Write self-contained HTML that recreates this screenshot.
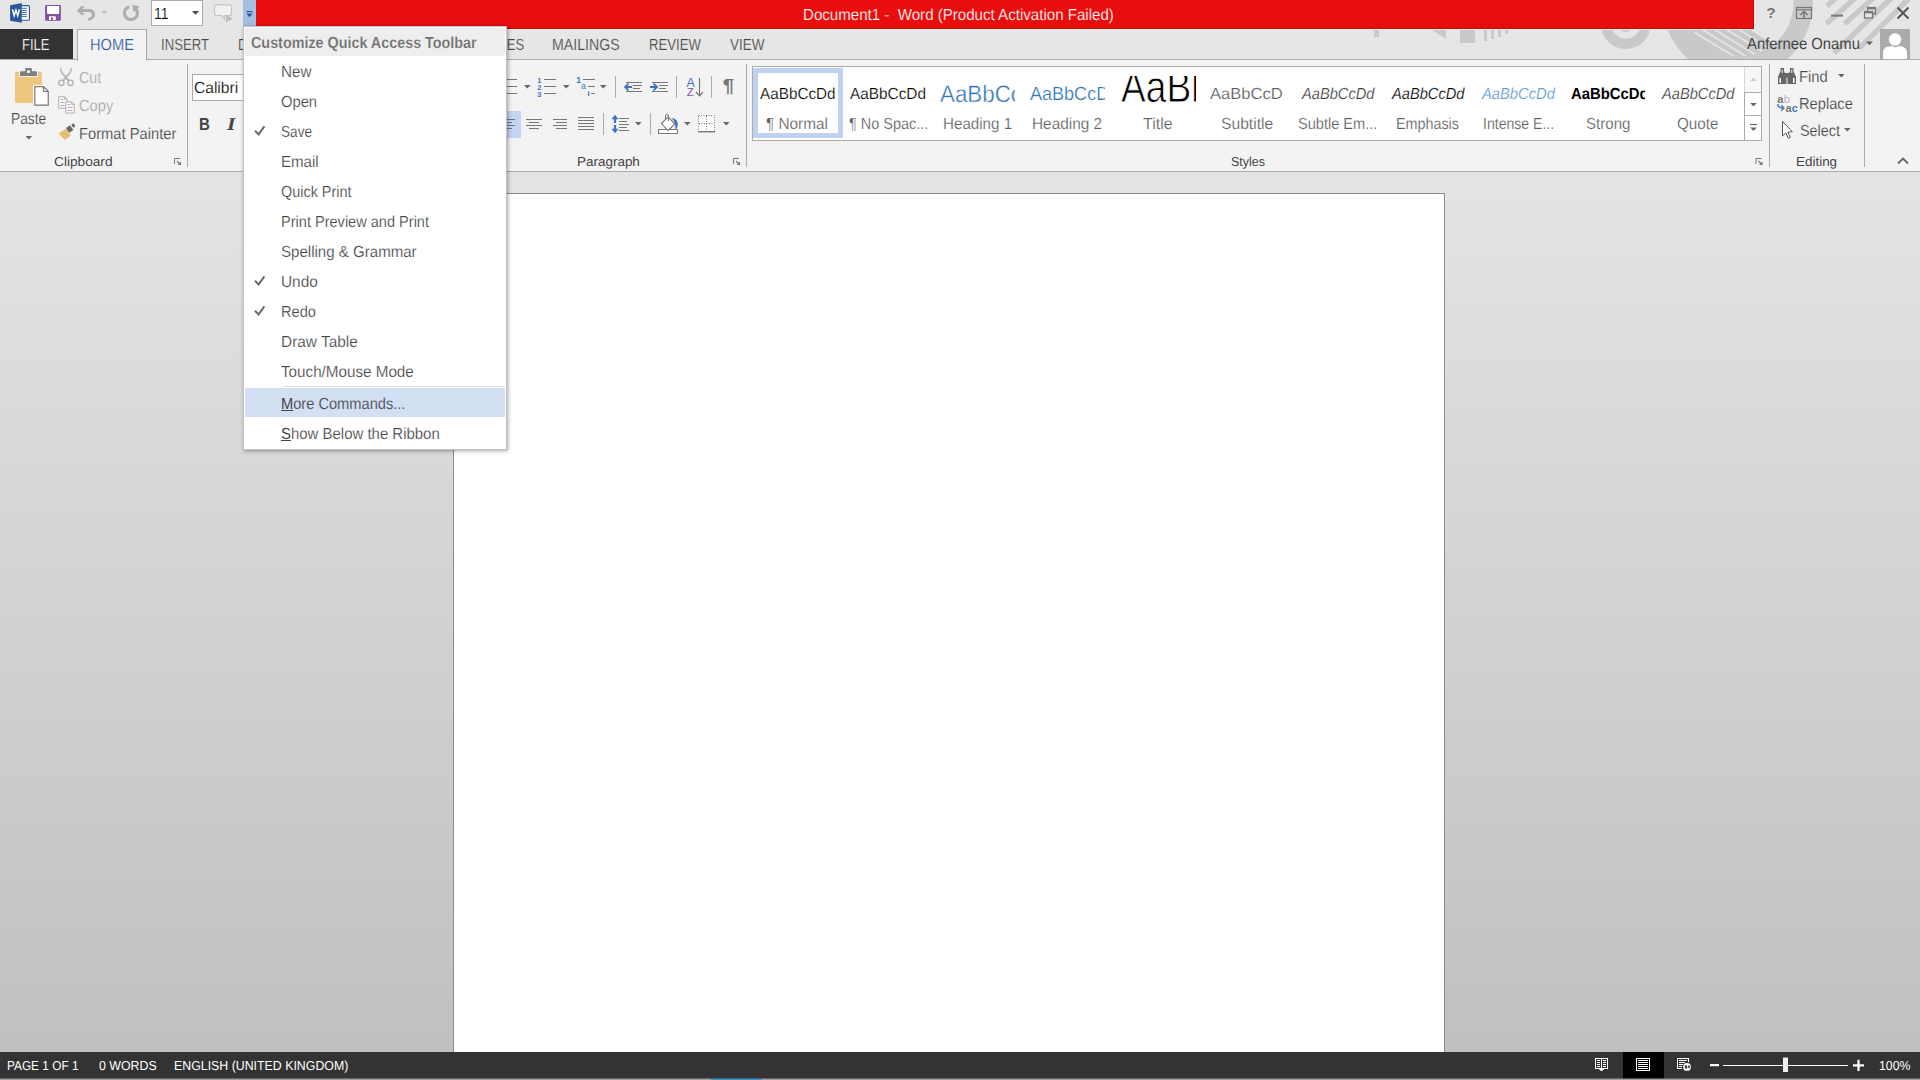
<!DOCTYPE html>
<html lang="en"><head><meta charset="utf-8"><title>Document1 - Word</title>
<style>
html,body{margin:0;padding:0}
body{width:1920px;height:1080px;position:relative;overflow:hidden;background:#e6e6e6;font-family:"Liberation Sans",sans-serif}
.a{position:absolute}
.t{text-rendering:geometricPrecision;position:absolute;white-space:pre;line-height:1;transform-origin:0 0;display:block}
.t u{text-decoration:underline;text-underline-offset:1px;text-decoration-thickness:1px;-webkit-text-stroke:0 transparent}
svg{position:absolute;left:0;top:0;overflow:visible}
</style></head><body>
<!-- window chrome -->
<div class="a" id="titlebg" style="left:0;top:0;width:1920px;height:60px;background:#e6e6e6"></div>
<svg id="deco" width="1920" height="60" viewBox="0 0 1920 60">
 <defs>
  <clipPath id="cpBig"><circle cx="1739.500" cy="2.600" r="54.500"/></clipPath>
  <clipPath id="cpTop"><rect x="0" y="0" width="1920" height="59"/></clipPath>
 </defs>
 <g clip-path="url(#cpTop)" fill="none" stroke="#c9c9c9">
  <path stroke-width="5.300" d="M1840.6 -6 L1826.9 6 M1859.9 -6 L1826.5 23.5 M1878.0 -6 L1844.6 23.8 M1895.7 -6 L1834.0 53 M1913.5 -6 L1859.0 48.5"/>
  <circle cx="1625.800" cy="24.200" r="19.700" stroke-width="10.200"/>
  <circle cx="1625.600" cy="24.500" r="7.600" fill="#c9c9c9" stroke="none"/>
  <path fill="#c9c9c9" stroke="none" fill-rule="evenodd" d="M1662.400 2.400 a75.300 75.300 0 1 0 150.600 0 a75.300 75.300 0 1 0 -150.600 0Z M1685.500 2.600 a54 54 0 1 0 108 0 a54 54 0 1 0 -108 0Z"/>
  <path clip-path="url(#cpBig)" stroke-width="4.700" d="M1617.0 -11.2 L1757.0 74.2 M1629.2 -11.2 L1769.2 74.2 M1641.5 -11.2 L1781.5 74.2 M1653.7 -11.2 L1793.7 74.2 M1666.0 -11.2 L1806.0 74.2 M1678.2 -11.2 L1818.2 74.2"/>
  <g fill="#c9c9c9" stroke="none">
   <rect x="1374" y="28" width="5" height="9"/>
   <path d="M1429 28 L1446 28 L1446 39 Z"/>
   <rect x="1460" y="28" width="15" height="15"/>
   <rect x="1484" y="28" width="3" height="13"/><rect x="1491" y="28" width="3" height="11"/><rect x="1498" y="28" width="3" height="9"/><rect x="1505" y="28" width="3" height="6"/>
  </g>
 </g>
</svg>
<div class="a" id="red" style="left:256px;top:0;width:1497px;height:28px;background:#e80e0e;border-bottom:1px solid #c60404;border-right:1px solid #c60404;box-sizing:content-box;box-shadow:0 1px 0 #e3eaea"></div>
<div class="a" id="qatbtn" style="left:243px;top:0;width:13px;height:26px;background:#a4bee4"></div>
<div class="a" id="fontsize" style="left:151px;top:0;width:50px;height:24px;background:#fff;border:1px solid #ababab"></div>
<!-- tabs -->
<div class="a" id="filetab" style="left:0;top:29px;width:73px;height:31px;background:#333"></div>
<div class="a" id="ribbon" style="left:0;top:59px;width:1920px;height:111px;background:#f3f3f3;border-top:1px solid #ababab;border-bottom:1px solid #ababab;box-sizing:content-box"></div>
<div class="a" id="hometab" style="left:77px;top:29px;width:68px;height:31px;background:#f3f3f3;border:1px solid #ababab;border-bottom:none"></div>
<div class="a" id="avatar" style="left:1880px;top:29px;width:30px;height:30px;background:#ababab;overflow:hidden">
 <svg width="30" height="30" viewBox="0 0 30 30"><circle cx="15" cy="10.5" r="6.2" fill="#fff"/><path d="M3 30 V24 Q3 18 9 17.5 L12 17 Q15 19.5 18 17 L21 17.5 Q27 18 27 24 V30 Z" fill="#fff"/></svg>
</div>
<!-- document area -->
<div class="a" id="docbg" style="left:0;top:172px;width:1920px;height:880px;background:linear-gradient(#e4e4e4,#c0c0c0)"></div>
<div class="a" id="page" style="left:453px;top:193px;width:990px;height:859px;background:#fff;border:1px solid #8c8c8c;border-bottom:none"></div>
<!-- status bar -->
<div class="a" id="status" style="left:0;top:1052px;width:1920px;height:26px;background:#333"></div>
<div class="a" style="left:0;top:1078px;width:1920px;height:1px;background:#666"></div>
<div class="a" style="left:0;top:1079px;width:1920px;height:1px;background:#a0a0a0"></div>
<div class="a" style="left:711px;top:1078px;width:51px;height:1px;background:#39688a"></div>
<div class="a" style="left:711px;top:1079px;width:51px;height:1px;background:#4390c4"></div>
<div class="a" style="left:1623px;top:1052px;width:41px;height:26px;background:#000"></div>
<div class="a" style="left:1623px;top:1078px;width:41px;height:1px;background:#4d4d4d"></div>
<!-- ribbon widgets -->
<div class="a" id="fontname" style="left:192px;top:74px;width:120px;height:25px;background:#fff;border:1px solid #ababab"></div>
<div class="a" id="alignleft" style="left:496px;top:111px;width:25px;height:27px;background:#c2d5f2"></div>
<div class="a" id="gallery" style="left:752px;top:66px;width:1008px;height:73px;background:#fff;border:1px solid #ababab"></div>
<div class="a" id="selstyle" style="left:753px;top:68px;width:80px;height:60px;border:5px solid #bfd2f2;background:#fff"></div>
<div class="a" style="left:1745px;top:67px;width:16px;height:25px;background:#f7f7f7"></div>
<div class="a" style="left:1744px;top:67px;width:1px;height:73px;background:#ababab"></div>
<div class="a" style="left:1744px;top:67px;width:1px;height:25px;background:#d6d6d6"></div>
<div class="a" style="left:1745px;top:92px;width:16px;height:1px;background:#ababab"></div>
<div class="a" style="left:1745px;top:115px;width:16px;height:1px;background:#ababab"></div>
<svg id="icons" width="1920" height="1080" viewBox="0 0 1920 1080">
<!-- ===== QAT ===== -->
<g id="wordicon">
 <rect x="20.500" y="5.600" width="8.900" height="14.700" rx="1" fill="#fff" stroke="#2b579a" stroke-width="1.100"/>
 <path d="M22 8.300h4.800M22 10.500h4.800M22 12.500h4.800M22 14.550h4.800M22 16.600h4.800" stroke="#2b579a" stroke-width=".900"/>
 <path d="M10.100 5.250 L21.800 3.050 V22.700 L10.100 20.650 Z" fill="#2b579a"/>
 <path d="M12.500 9.300 L14.150 15.700 L15.950 10.200 L17.750 15.700 L19.400 9.300" fill="none" stroke="#fff" stroke-width="1.500" stroke-linejoin="miter"/>
</g>
<g id="saveicon">
 <rect x="45.100" y="5.100" width="15.800" height="15.700" rx="1.200" fill="#8450a6"/>
 <path d="M47 5.900 H59.200 V13 Q59.200 14.050 58.200 14.050 H48 Q47 14.050 47 13Z" fill="#fff"/>
 <rect x="49" y="16.250" width="6.800" height="3.800" rx=".600" fill="#fff"/>
 <rect x="51" y="17.300" width="1.900" height="3.500" fill="#8450a6"/>
</g>
<g id="undo" fill="#adadad">
 <path d="M76.900 10.500 L81.250 6.200 H84.800 L82.200 9 H89.600 Q95 9.400 95 14.600 Q94.800 20 88.100 20.900 V18.300 Q91.800 17.800 91.800 14.600 Q91.800 12.200 88.700 12.100 H82.200 L84.800 14.800 H81.250Z"/>
</g>
<path d="M101 11 h6.5 l-3.25 3.6z" fill="#c2c2c2"/>
<g id="redo">
 <path d="M134.200 7.400 A6.500 6.500 0 1 1 129.300 6.700" fill="none" stroke="#adadad" stroke-width="3"/>
 <path d="M132.100 5 L139.600 6.300 L133.750 12.500Z" fill="#adadad"/>
</g>
<path d="M192 11 h7 l-3.5 3.8z" fill="#444"/>
<g id="bubble">
 <path d="M216.5 4.8 H229.5 Q231.5 4.8 231.5 6.8 V13.5 Q231.5 15.5 229.5 15.5 H224.5 V19 L221.5 15.5 H216.5 Q214.5 15.5 214.5 13.5 V6.8 Q214.5 4.8 216.5 4.8Z" fill="#f5f0f6" stroke="#c4c4c4" stroke-width="1.2"/>
 <path d="M226 14.5 L233 18.5 L226 22.5Z" fill="#c0c0c0"/>
</g>
<g id="qatarrow" fill="#2b579a"><rect x="246.5" y="11" width="6" height="1.2"/><path d="M246.3 13.6 h6.4 l-3.2 3.6z"/></g>
<!-- window controls -->
<g id="winctl" stroke="#777" fill="none">
 <text x="1766.3" y="18.3" font-family="Liberation Sans, sans-serif" font-weight="bold" font-size="15.5" fill="#777" stroke="none">?</text>
 <rect x="1796.5" y="7.5" width="15" height="11" stroke-width="1.2"/><path d="M1796.5 9.8h15" stroke-width="1.2"/>
 <path d="M1804 18.5 V12 M1800.3 15 L1804 11.5 L1807.7 15" stroke-width="1.6"/>
 <path d="M1831 15.6 h12" stroke-width="2"/>
 <rect x="1867.5" y="7.5" width="8" height="6.5" stroke-width="1.3"/><path d="M1867.5 8.6h8" stroke-width="1.5"/>
 <rect x="1864.500" y="11.5" width="8" height="6.500" stroke-width="1.3" fill="#e6e6e6"/><path d="M1864.5 12.6h8" stroke-width="1.5"/>
 <path d="M1897.5 7.5 L1908.5 18.5 M1908.5 7.5 L1897.5 18.5" stroke="#555" stroke-width="2"/>
</g>
<path d="M1866 41.500 h7 l-3.5 3.800z" fill="#666"/>
<!-- ===== Clipboard group ===== -->
<g id="paste">
 <rect x="15" y="71.850" width="26.950" height="31.100" rx="1.500" fill="#edc77d"/>
 <rect x="19" y="70.500" width="19" height="6.400" fill="#f3f3f3"/>
 <path d="M20 75.900 V72.200 Q20 71.200 21 71.200 H25.100 V69.400 Q25.100 68.100 26.400 68.100 H30.650 Q31.950 68.100 31.950 69.400 V71.200 H35.900 Q36.900 71.200 36.900 72.200 V75.900Z" fill="#7e7e7e"/>
 <rect x="27.100" y="70.300" width="2.900" height="2.600" fill="#fff"/>
 <rect x="33.200" y="85.100" width="16.600" height="21.700" fill="#f3f3f3"/>
 <rect x="33.200" y="85.100" width="8.800" height="17.850" fill="#fff"/>
 <path d="M34.800 86.700 H43.500 L48.250 91.500 V105.200 H34.800Z" fill="#fff" stroke="#777" stroke-width="1.200"/>
 <path d="M43.500 86.700 V91.500 H48.250" fill="none" stroke="#777" stroke-width="1.200"/>
</g>
<path d="M25.500 136 h6.600 l-3.300 3.600z" fill="#666"/>
<g id="cut">
 <path d="M60.600 67.800 Q61 71.800 65.200 75.600 L69.500 80.600 L68.200 81.300 L64.300 76.500 Q59.400 72 60.600 67.800Z" fill="#b2b2b2" stroke="#b2b2b2" stroke-width=".600"/>
 <path d="M71.200 67.800 Q70.800 71.800 66.600 75.600 L62.300 80.600 L63.600 81.300 L67.500 76.500 Q72.400 72 71.200 67.800Z" fill="#b2b2b2" stroke="#b2b2b2" stroke-width=".600"/>
 <circle cx="61.400" cy="82.800" r="2.700" fill="none" stroke="#b2b2b2" stroke-width="1.300"/><circle cx="70.500" cy="82.800" r="2.700" fill="none" stroke="#b2b2b2" stroke-width="1.300"/>
</g>
<g id="copy" fill="#fcf4fc" stroke="#b6b0b6" stroke-width="1">
 <path d="M58.700 96.700 H64.600 L67.200 99.300 V108.200 H58.700Z"/>
 <path d="M64.600 96.700 V99.300 H67.200" fill="none"/>
 <path d="M60.500 99.500h2.500M60.500 102.500h4M60.500 105.500h4" stroke="#b0b0b0"/>
 <path d="M65.800 101.800 H71.700 L74.300 104.400 V113.100 H65.800Z"/>
 <path d="M71.700 101.800 V104.400 H74.300" fill="none"/>
 <path d="M67.500 104.500h2.500M67.500 107.500h5M67.500 110.500h5" stroke="#b0b0b0"/>
</g>
<g id="fmtpaint">
 <path d="M58.500 133.500 L66 128.500 L71 135.500 L65 140Z" fill="#e9bd75"/>
 <path d="M66 128 L70 125.300 L73.300 130 L69.300 132.700Z" fill="#666"/>
 <path d="M71.300 124.800 L73.500 123.300 L75.500 126.200 L73.300 127.700Z" fill="#666"/>
</g>
<g id="launch1" fill="none" stroke="#777" stroke-width="1"><path d="M174.500 164 V158.500 H180"/><path d="M177 161 L180.500 164.500" stroke-width="1.300"/><path d="M181 161.500 V165 H177.500Z" fill="#777" stroke="none"/></g>
<g id="launch2" transform="translate(559,0)" fill="none" stroke="#777" stroke-width="1"><path d="M174.500 164 V158.500 H180"/><path d="M177 161 L180.500 164.500" stroke-width="1.300"/><path d="M181 161.500 V165 H177.500Z" fill="#777" stroke="none"/></g>
<g id="launch3" transform="translate(1581.500,0)" fill="none" stroke="#777" stroke-width="1"><path d="M174.500 164 V158.500 H180"/><path d="M177 161 L180.500 164.500" stroke-width="1.300"/><path d="M181 161.500 V165 H177.500Z" fill="#777" stroke="none"/></g>
<!-- group separators -->
<g stroke="#ababab" stroke-width="1" shape-rendering="crispEdges">
 <path d="M187.500 64 V167 M746.500 64 V167 M1769.500 64 V167 M1864.500 64 V167"/>
 <path d="M615.500 76 V98 M676.500 76 V98 M711.500 76 V98 M603.500 113 V135 M650.500 113 V135"/>
</g>
<!-- ===== Paragraph group ===== -->
<g id="para" shape-rendering="crispEdges" stroke="#777" stroke-width="1" fill="none">
 <!-- bullets lines -->
 <path d="M500 79.500 H517 M500 86.500 H517 M500 93.500 H517"/>
 <!-- numbering lines -->
 <path d="M544 79.500 H556 M544 86.500 H556 M544 93.500 H556"/>
 <!-- multilevel -->
 <path d="M583 79.500 H595 M588 86.500 H595 M591 93.500 H595"/>
 <!-- decrease indent -->
 <path d="M626 82.500 H642 M633 85.500 H642 M633 88.500 H640 M626 91.500 H642"/>
 <!-- increase indent -->
 <path d="M652 82.500 H668 M659 85.500 H668 M659 88.500 H666 M652 91.500 H668"/>
 <!-- align left -->
 <path d="M500 119.500 H515 M500 122.500 H512 M500 125.500 H515 M500 128.500 H512"/>
 <!-- center -->
 <path d="M526 119.500 H542 M529 122.500 H539 M526 125.500 H542 M529 128.500 H539"/>
 <!-- right -->
 <path d="M553 119.500 H567 M556 122.500 H567 M553 125.500 H567 M556 128.500 H567"/>
 <!-- justify -->
 <path d="M578 117.500 H594 M578 120.500 H594 M578 123.500 H594 M578 126.500 H594 M578 129.500 H594"/>
 <!-- line spacing lines -->
 <path d="M619 118.500 H629 M619 121.500 H627 M619 124.500 H629 M619 127.500 H627 M619 130.500 H629"/>
</g>
<g fill="#666"><path d="M524 85 h6.600 l-3.300 3.600z"/><path d="M563 85 h6.600 l-3.300 3.600z"/><path d="M600 85 h6.600 l-3.300 3.600z"/><path d="M635 122 h6.600 l-3.300 3.600z"/><path d="M684 122 h6.600 l-3.300 3.600z"/><path d="M723 122 h6.600 l-3.300 3.600z"/></g>
<g font-family="Liberation Sans, sans-serif" font-weight="bold" fill="#3e73bd" font-size="7.500">
 <text x="537.300" y="82.500">1</text><text x="537.300" y="89.600">2</text><text x="537.300" y="96.700">3</text>
 <text x="576.300" y="82.800" font-size="8.500">1</text><text x="581" y="89.300" font-size="9" font-weight="normal">a</text><text x="587.600" y="96.300" font-size="8">i</text>
</g>
<g id="indarrows" fill="none" stroke="#3e73bd" stroke-width="1.800">
 <path d="M632 87 H625 M628.500 83.600 L625 87 L628.500 90.400"/>
 <path d="M650 87 H657 M653.500 83.600 L657 87 L653.500 90.400"/>
</g>
<g id="sort">
 <text x="686.500" y="86.800" font-family="Liberation Sans, sans-serif" font-size="12.500" fill="#3e73bd">A</text>
 <text x="686.800" y="96.300" font-family="Liberation Sans, sans-serif" font-size="11.500" fill="#8e4fb0">Z</text>
 <path d="M699.500 78 V95.500 M696 92 L699.500 95.800 L703 92" fill="none" stroke="#777" stroke-width="1.200"/>
</g>
<text x="722.800" y="92.400" font-family="Liberation Sans, sans-serif" font-size="18" font-weight="bold" fill="#777" textLength="11.500" lengthAdjust="spacingAndGlyphs">¶</text>
<g id="lsarrows" fill="#3e73bd">
 <path d="M615 114.800 L618.600 119.200 H616.100 V123 H613.900 V119.200 H611.400Z"/>
 <path d="M615 133.200 L618.600 128.800 H616.100 V125 H613.900 V128.800 H611.400Z"/>
</g>
<g id="shading">
 <rect x="658.500" y="129.500" width="19" height="4" fill="#fff" stroke="#777"/>
 <path d="M661.500 123.500 L668 117 L675 124 L668 130.500Z" fill="#fff" stroke="#777" stroke-width="1.100"/>
 <path d="M668.500 121 V116 Q668.500 114.500 667 114.500 Q665.500 114.500 665.500 116 V119" fill="none" stroke="#777" stroke-width="1"/>
 <path d="M671.500 118 Q678.200 119 677.900 125 Q677.600 128.200 675.300 129.400 Q676.400 123 671.500 118Z" fill="#3e73bd"/>
</g>
<g id="borders" stroke="#777" fill="none">
 <rect x="698.500" y="115.500" width="16" height="16" stroke-dasharray="1 1.500" stroke-width="1" fill="#fff"/>
 <path d="M706.500 116 V131 M699 123.500 H714" stroke-dasharray="1 1.500" stroke-width="1"/>
 <path d="M698 131.700 H715" stroke-width="1.400"/>
</g>
<!-- gallery scroll -->
<path d="M1750.500 81 l3 -3.200 l3 3.200z" fill="#c8c8c8"/>
<path d="M1750.200 103 h6.600 l-3.300 3.600z" fill="#666"/>
<path d="M1750 124.500 h7" stroke="#666" stroke-width="1.200"/><path d="M1750.200 127.500 h6.600 l-3.300 3.600z" fill="#666"/>
<!-- editing -->
<g id="find" fill="#666">
 <path d="M1780.500 68 h3.500 v3 l2.500 6 v7 h-8.500 v-7 l2.500 -6z"/>
 <path d="M1790 68 h3.500 v3 l2.500 6 v7 h-8.500 v-7 l2.500 -6z"/>
 <rect x="1783.500" y="73" width="7" height="4.500"/>
 <rect x="1779.500" y="78" width="1.500" height="5" fill="#fff"/><rect x="1793" y="78" width="1.500" height="5" fill="#fff"/>
 <rect x="1781.700" y="69.500" width="1" height="3.500" fill="#f3f3f3"/><rect x="1791.300" y="69.500" width="1" height="3.500" fill="#f3f3f3"/>
</g>
<path d="M1838 74 h6.600 l-3.300 3.600z" fill="#666"/>
<g id="replace" font-family="Liberation Sans, sans-serif" font-size="11">
 <text x="1777.300" y="102.600" fill="#777" font-weight="bold">a</text><text x="1783.800" y="102.600" fill="#b8b8b8">b</text>
 <text x="1785.600" y="112" fill="#777" font-weight="bold">a</text><text x="1791.800" y="112" fill="#3e73bd" font-weight="bold">c</text>
 <path d="M1777.800 104 Q1777.800 108 1783.500 108 M1781.200 105.300 L1784 108 L1781.200 110.700" fill="none" stroke="#3e73bd" stroke-width="1.300"/>
</g>
<path d="M1782.500 121.500 V136 L1785.800 133 L1788.300 138.300 L1790.300 137.400 L1787.800 132.200 L1792.300 131.700Z" fill="#fff" stroke="#555" stroke-width="1"/>
<path d="M1844 128 h6.600 l-3.300 3.600z" fill="#666"/>
<path d="M1898 163.500 L1903 158.500 L1908 163.500" fill="none" stroke="#666" stroke-width="1.800"/>
<!-- ===== Status bar ===== -->
<g id="status-icons" fill="none" stroke="#fff" stroke-width="1" shape-rendering="crispEdges">
 <path d="M1595.500 1058.500 H1607.500 V1068.500 H1595.500Z"/>
 <path d="M1601.500 1059 V1069"/>
 <path d="M1597 1060.500h3M1597 1062.500h3M1597 1064.500h3M1597 1066.500h3M1603 1060.500h3M1603 1062.500h3M1603 1064.500h3M1603 1066.500h3"/>
 <path d="M1599.500 1069 L1601.500 1071 L1603.500 1069Z" fill="#fff" shape-rendering="auto"/>
 <rect x="1636.500" y="1058.500" width="13" height="12"/>
 <path d="M1638 1060.500h10M1638 1062.500h10M1638 1064.500h10M1638 1066.500h10M1638 1068.500h10"/>
 <path d="M1688.500 1062 V1058.500 H1677.500 V1068.500 H1682"/>
 <path d="M1679 1060.500h8M1679 1062.500h6M1679 1064.500h4M1679 1066.500h3"/>
 <circle cx="1687" cy="1066.900" r="3.900" fill="#fff" stroke="none" shape-rendering="auto"/>
 <path d="M1684.600 1065.200 l2.300 .300 l.600 2 l-1.500 1.700 l-1.200 -1.500z M1688.600 1064.800 l1.600 1.700 l-.800 2.300 l-1.500 -1.600z" fill="#444" stroke="none" shape-rendering="auto"/>
</g>
<g id="zoomslider" fill="#fff">
 <rect x="1710" y="1064" width="9" height="2.200"/>
 <rect x="1723" y="1065" width="125" height="1"/>
 <rect x="1783" y="1057.500" width="5" height="14.500" fill="#f0f0f0"/>
 <rect x="1853" y="1064.300" width="11" height="2.200"/><rect x="1857.400" y="1059.800" width="2.200" height="11.200"/>
</g>
</svg>

<div id="txt">
<span class="t" style="left:803.22px;top:7.59px;font-size:16px;color:#fff;transform:scaleX(0.9430);-webkit-text-stroke:0.2px #e80e0e;">Document1 -&nbsp; Word (Product Activation Failed)</span>
<span class="t" style="left:22.12px;top:37.59px;font-size:16px;color:#fff;transform:scaleX(0.8102);-webkit-text-stroke:0.2px #333;">FILE</span>
<span class="t" style="left:89.68px;top:37.59px;font-size:16px;color:#2b579a;transform:scaleX(0.9144);-webkit-text-stroke:0.2px #f3f3f3;">HOME</span>
<span class="t" style="left:160.86px;top:37.59px;font-size:16px;color:#444;transform:scaleX(0.8212);-webkit-text-stroke:0.2px #e6e6e6;">INSERT</span>
<span class="t" style="left:237.62px;top:37.59px;font-size:16px;color:#444;transform:scaleX(0.8104);-webkit-text-stroke:0.2px #e6e6e6;">DESIGN</span>
<span class="t" style="left:313.52px;top:37.59px;font-size:16px;color:#444;transform:scaleX(0.8451);-webkit-text-stroke:0.2px #e6e6e6;">PAGE LAYOUT</span>
<span class="t" style="left:434.61px;top:37.59px;font-size:16px;color:#444;transform:scaleX(0.8152);-webkit-text-stroke:0.2px #e6e6e6;">REFERENCES</span>
<span class="t" style="left:552.20px;top:37.59px;font-size:16px;color:#444;transform:scaleX(0.8840);-webkit-text-stroke:0.2px #e6e6e6;">MAILINGS</span>
<span class="t" style="left:648.70px;top:37.59px;font-size:16px;color:#444;transform:scaleX(0.8227);-webkit-text-stroke:0.2px #e6e6e6;">REVIEW</span>
<span class="t" style="left:729.84px;top:37.59px;font-size:16px;color:#444;transform:scaleX(0.8425);-webkit-text-stroke:0.2px #e6e6e6;">VIEW</span>
<span class="t" style="left:1747.42px;top:36.59px;font-size:16px;color:#444;transform:scaleX(0.9267);">Anfernee Onamu</span>
<span class="t" style="left:153.69px;top:6.59px;font-size:16px;color:#000;transform:scaleX(0.8764);-webkit-text-stroke:0.2px #fff;">11</span>
<span class="t" style="left:10.99px;top:111.59px;font-size:16px;color:#444;transform:scaleX(0.8575);-webkit-text-stroke:0.2px #f3f3f3;">Paste</span>
<span class="t" style="left:79.45px;top:70.59px;font-size:16px;color:#a6a6a6;transform:scaleX(0.8919);-webkit-text-stroke:0.2px #f3f3f3;">Cut</span>
<span class="t" style="left:79.41px;top:98.59px;font-size:16px;color:#a6a6a6;transform:scaleX(0.9161);-webkit-text-stroke:0.2px #f3f3f3;">Copy</span>
<span class="t" style="left:78.88px;top:126.59px;font-size:16px;color:#444;transform:scaleX(0.9196);-webkit-text-stroke:0.2px #f3f3f3;">Format Painter</span>
<span class="t" style="left:54.43px;top:155.43px;font-size:13px;color:#444;transform:scaleX(1.0519);">Clipboard</span>
<span class="t" style="left:193.73px;top:80.59px;font-size:16px;color:#000;transform:scaleX(0.9722);-webkit-text-stroke:0.2px #fff;">Calibri</span>
<span class="t" style="left:198.76px;top:116.27px;font-size:17.4px;color:#444;transform:scaleX(0.8661);font-weight:bold;">B</span>
<span class="t" style="left:227.03px;top:114.84px;font-size:18.1px;color:#444;transform:scaleX(1.1995);font-weight:bold;font-style:italic;font-family:'Liberation Serif', serif;">I</span>
<span class="t" style="left:576.54px;top:155.43px;font-size:13px;color:#444;transform:scaleX(1.0353);">Paragraph</span>
<span class="t" style="left:1230.63px;top:155.43px;font-size:13px;color:#444;transform:scaleX(0.9595);">Styles</span>
<span class="t" style="left:1796.07px;top:155.43px;font-size:13px;color:#444;transform:scaleX(1.0336);">Editing</span>
<span class="t" style="left:1799.36px;top:69.59px;font-size:16px;color:#444;transform:scaleX(0.9268);-webkit-text-stroke:0.2px #f3f3f3;">Find</span>
<span class="t" style="left:1799.38px;top:96.59px;font-size:16px;color:#444;transform:scaleX(0.9173);-webkit-text-stroke:0.2px #f3f3f3;">Replace</span>
<span class="t" style="left:1800.03px;top:123.59px;font-size:16px;color:#444;transform:scaleX(0.9000);-webkit-text-stroke:0.2px #f3f3f3;">Select</span>
<span class="t" style="left:6.83px;top:1059.43px;font-size:13px;color:#fff;transform:scaleX(0.9107);">PAGE 1 OF 1</span>
<span class="t" style="left:98.54px;top:1059.43px;font-size:13px;color:#fff;transform:scaleX(0.9508);">0 WORDS</span>
<span class="t" style="left:173.68px;top:1059.43px;font-size:13px;color:#fff;transform:scaleX(0.9502);">ENGLISH (UNITED KINGDOM)</span>
<span class="t" style="left:1879.14px;top:1059.43px;font-size:13px;color:#fff;transform:scaleX(0.9426);">100%</span>
<span class="t" style="left:760.38px;top:86.59px;font-size:16px;color:#000;transform:scaleX(0.9549);-webkit-text-stroke:0.2px #fff;">AaBbCcDd</span>
<span class="t" style="left:765.90px;top:116.59px;font-size:16px;color:#5e5e5e;transform:scaleX(0.9585);-webkit-text-stroke:0.2px #fff;">¶ Normal</span>
<span class="t" style="left:849.88px;top:86.59px;font-size:16px;color:#000;transform:scaleX(0.9604);-webkit-text-stroke:0.2px #fff;">AaBbCcDd</span>
<span class="t" style="left:848.59px;top:116.59px;font-size:16px;color:#5e5e5e;transform:scaleX(0.9045);-webkit-text-stroke:0.2px #fff;">¶ No Spac...</span>
<div class="a" style="left:935px;top:70px;width:79.8px;height:42.0px;overflow:hidden"><span class="t" style="left:5.36px;top:12.88px;font-size:23.8px;color:#2e74b5;transform:scaleX(0.9397);-webkit-text-stroke:0.4px #fff;">AaBbCc</span></div>
<span class="t" style="left:942.60px;top:116.59px;font-size:16px;color:#5e5e5e;transform:scaleX(0.9473);-webkit-text-stroke:0.2px #fff;">Heading 1</span>
<div class="a" style="left:1025px;top:70px;width:79.8px;height:42.0px;overflow:hidden"><span class="t" style="left:5.43px;top:14.95px;font-size:19px;color:#2e74b5;transform:scaleX(0.9490);-webkit-text-stroke:0.25px #fff;">AaBbCcD</span></div>
<span class="t" style="left:1032.35px;top:116.59px;font-size:16px;color:#5e5e5e;transform:scaleX(0.9610);-webkit-text-stroke:0.2px #fff;">Heading 2</span>
<div class="a" style="left:1115px;top:75.9px;width:80.7px;height:36.1px;overflow:hidden"><span class="t" style="left:6.06px;top:-9.57px;font-size:44.5px;color:#000;transform:scaleX(0.8338);-webkit-text-stroke:0.8px #fff;">AaBb</span></div>
<span class="t" style="left:1143.44px;top:116.59px;font-size:16px;color:#5e5e5e;transform:scaleX(0.9995);-webkit-text-stroke:0.2px #fff;">Title</span>
<span class="t" style="left:1209.86px;top:86.59px;font-size:16px;color:#5a5a5a;transform:scaleX(1.0364);-webkit-text-stroke:0.2px #fff;">AaBbCcD</span>
<span class="t" style="left:1221.40px;top:116.59px;font-size:16px;color:#5e5e5e;transform:scaleX(0.9776);-webkit-text-stroke:0.2px #fff;">Subtitle</span>
<span class="t" style="left:1301.75px;top:86.61px;font-size:16px;color:#404040;transform:scaleX(0.9151);font-style:italic;-webkit-text-stroke:0.2px #fff;">AaBbCcDd</span>
<span class="t" style="left:1298.18px;top:116.59px;font-size:16px;color:#5e5e5e;transform:scaleX(0.9104);-webkit-text-stroke:0.2px #fff;">Subtle Em...</span>
<span class="t" style="left:1391.75px;top:86.61px;font-size:16px;color:#000;transform:scaleX(0.9151);font-style:italic;-webkit-text-stroke:0.2px #fff;">AaBbCcDd</span>
<span class="t" style="left:1396.19px;top:116.59px;font-size:16px;color:#5e5e5e;transform:scaleX(0.8963);-webkit-text-stroke:0.2px #fff;">Emphasis</span>
<span class="t" style="left:1481.75px;top:86.61px;font-size:16px;color:#5b9bd5;transform:scaleX(0.9205);font-style:italic;-webkit-text-stroke:0.2px #fff;">AaBbCcDd</span>
<span class="t" style="left:1482.58px;top:116.59px;font-size:16px;color:#5e5e5e;transform:scaleX(0.8785);-webkit-text-stroke:0.2px #fff;">Intense E...</span>
<div class="a" style="left:1565px;top:70px;width:80.2px;height:42.0px;overflow:hidden"><span class="t" style="left:5.61px;top:17.46px;font-size:16px;color:#000;transform:scaleX(0.9292);font-weight:bold;">AaBbCcDd</span></div>
<span class="t" style="left:1586.05px;top:116.59px;font-size:16px;color:#5e5e5e;transform:scaleX(0.9436);-webkit-text-stroke:0.2px #fff;">Strong</span>
<span class="t" style="left:1661.75px;top:86.61px;font-size:16px;color:#404040;transform:scaleX(0.9151);font-style:italic;-webkit-text-stroke:0.2px #fff;">AaBbCcDd</span>
<span class="t" style="left:1676.99px;top:116.59px;font-size:16px;color:#5e5e5e;transform:scaleX(0.9530);-webkit-text-stroke:0.2px #fff;">Quote</span>
</div>
<!-- ===== Customize Quick Access Toolbar menu ===== -->
<div class="a" id="menu" style="left:243px;top:26px;width:262px;height:422px;background:#fff;border:1px solid #c2c2c2;box-shadow:1px 1px 4px rgba(0,0,0,.36)"></div>
<div class="a" style="left:245px;top:28px;width:260px;height:28px;background:#eee"></div>
<div class="a" style="left:283px;top:386px;width:222px;height:1px;background:#e1e1e1"></div>
<div class="a" style="left:245px;top:388px;width:260px;height:29px;background:#d3dff3"></div>
<svg width="1920" height="1080" viewBox="0 0 1920 1080" fill="none" stroke="#6c6c6c" stroke-width="2">
 <path d="M255 130.800 L258.600 134.400 L264.400 126.400"/>
 <path d="M255 280.800 L258.600 284.400 L264.400 276.400"/>
 <path d="M255 310.800 L258.600 314.400 L264.400 306.400"/>
</svg>
<div id="menutxt">
<span class="t" style="left:251.29px;top:36.46px;font-size:16px;color:#6d6d6d;transform:scaleX(0.8968);font-weight:bold;-webkit-text-stroke:0.2px #eee;">Customize Quick Access Toolbar</span>
<span class="t" style="left:280.59px;top:64.59px;font-size:16px;color:#444;transform:scaleX(0.9507);-webkit-text-stroke:0.2px #fff;">New</span>
<span class="t" style="left:281.26px;top:94.59px;font-size:16px;color:#444;transform:scaleX(0.9212);-webkit-text-stroke:0.2px #fff;">Open</span>
<span class="t" style="left:281.40px;top:124.59px;font-size:16px;color:#444;transform:scaleX(0.8510);-webkit-text-stroke:0.2px #fff;">Save</span>
<span class="t" style="left:280.63px;top:154.59px;font-size:16px;color:#444;transform:scaleX(0.9417);-webkit-text-stroke:0.2px #fff;">Email</span>
<span class="t" style="left:281.30px;top:184.59px;font-size:16px;color:#444;transform:scaleX(0.9009);-webkit-text-stroke:0.2px #fff;">Quick Print</span>
<span class="t" style="left:280.69px;top:214.59px;font-size:16px;color:#444;transform:scaleX(0.9095);-webkit-text-stroke:0.2px #fff;">Print Preview and Print</span>
<span class="t" style="left:281.26px;top:244.59px;font-size:16px;color:#444;transform:scaleX(0.9415);-webkit-text-stroke:0.2px #fff;">Spelling &amp; Grammar</span>
<span class="t" style="left:280.93px;top:274.59px;font-size:16px;color:#444;transform:scaleX(0.9606);-webkit-text-stroke:0.2px #fff;">Undo</span>
<span class="t" style="left:280.68px;top:304.59px;font-size:16px;color:#444;transform:scaleX(0.9133);-webkit-text-stroke:0.2px #fff;">Redo</span>
<span class="t" style="left:280.55px;top:334.59px;font-size:16px;color:#444;transform:scaleX(0.9632);-webkit-text-stroke:0.2px #fff;">Draw Table</span>
<span class="t" style="left:281.39px;top:364.59px;font-size:16px;color:#444;transform:scaleX(0.9510);-webkit-text-stroke:0.2px #fff;">Touch/Mouse Mode</span>
<span class="t" style="left:280.68px;top:396.59px;font-size:16px;color:#444;transform:scaleX(0.9147);-webkit-text-stroke:0.2px #d3dff3;"><u>M</u>ore Commands...</span>
<span class="t" style="left:281.27px;top:426.59px;font-size:16px;color:#444;transform:scaleX(0.9344);-webkit-text-stroke:0.2px #fff;"><u>S</u>how Below the Ribbon</span>
</div>
</body></html>
